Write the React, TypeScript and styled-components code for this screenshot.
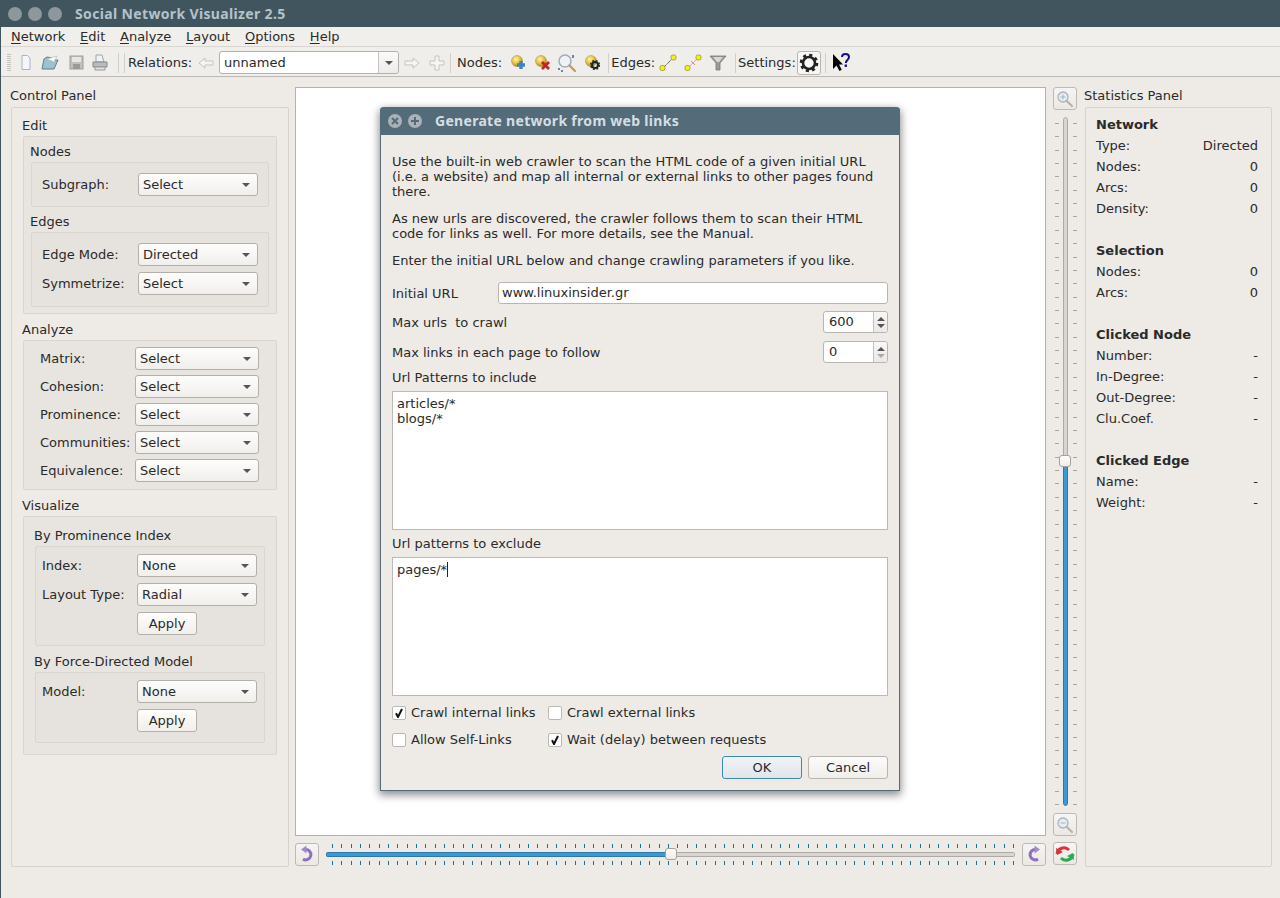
import React from 'react';
import styled, { createGlobalStyle } from 'styled-components';

const GlobalStyle = createGlobalStyle`
  * {
    margin: 0;
    padding: 0;
    box-sizing: border-box;
  }

  body {
    font-family: 'DejaVu Sans', sans-serif;
    font-size: 13px;
    color: #2a2a2a;
    background: #eeebe7;
    overflow: hidden;
  }
`;

const Root = styled.div`
  position: relative;
  width: 1280px;
  height: 898px;
  display: flex;
  flex-direction: column;
  background: #eeebe7;
  border-left: 1px solid #41555f;
  overflow: hidden;
`;

const TitleBar = styled.div`
  height: 27px;
  flex: none;
  margin-left: -1px;
  padding-left: 8px;
  display: flex;
  align-items: center;
  gap: 6px;
  background: #41555f;
`;

const WinDot = styled.span`
  width: 14px;
  height: 14px;
  border-radius: 50%;
  background: #8d979c;
`;

const WinTitle = styled.span`
  margin-left: 7px;
  padding-bottom: 1px;
  font-family: 'Noto Sans', sans-serif;
  font-weight: 700;
  font-size: 14px;
  letter-spacing: 0.35px;
  color: #b4c2cb;
`;

const MenuBar = styled.div`
  height: 20px;
  flex: none;
  padding-left: 10px;
  display: flex;
  gap: 14.75px;
  align-items: center;
  line-height: 20px;
  background: #f1efeb;
  border-bottom: 1px solid #dad7d3;
  u {
    text-underline-offset: 2px;
  }
`;

const ToolBar = styled.div`
  height: 30px;
  flex: none;
  padding-top: 2px;
  display: flex;
  align-items: center;
  background: #f0eeea;
  border-bottom: 1px solid #bdbab6;
`;

const Grip = styled.span`
  width: 4px;
  height: 18px;
  margin-left: 6px;
  background: repeating-linear-gradient(to bottom, #c6c3bf 0 1px, transparent 1px 2px);
`;

const ToolSep = styled.span<{ $left: number; $right: number }>`
  width: 1px;
  height: 20px;
  flex: none;
  background: #d2cfcb;
  margin: 0 ${(p) => p.$right}px 0 ${(p) => p.$left}px;
`;

const ToolSlot = styled.span<{ $left: number; $width?: number }>`
  flex: none;
  margin-left: ${(p) => p.$left}px;
  width: ${(p) => p.$width ?? 20}px;
  height: 20px;
  display: flex;
  align-items: center;
  justify-content: center;
`;

const ToolLabel = styled.span`
  flex: none;
`;

const RelCombo = styled.div`
  width: 180px;
  height: 23px;
  margin-left: 3px;
  flex: none;
  display: flex;
  background: #fff;
  border: 1px solid #b3b0ac;
  border-radius: 3px;
  line-height: 21px;
  padding-left: 4px;
  align-items: center;
  justify-content: space-between;
`;

const RelArrow = styled.span`
  width: 20px;
  height: 21px;
  display: flex;
  align-items: center;
  justify-content: center;
  background: linear-gradient(#fbfaf9, #eeecea);
  border-left: 1px solid #c6c3bf;
  border-radius: 0 3px 3px 0;
`;

const Caret = styled.i`
  width: 0;
  height: 0;
  border-left: 4px solid transparent;
  border-right: 4px solid transparent;
  border-top: 4px solid #555;
`;

const SettingsBtn = styled.span`
  flex: none;
  width: 24px;
  height: 24px;
  margin-left: 1px;
  border: 1px solid #b8b5b1;
  border-radius: 3px;
  background: #f8f7f5;
  display: flex;
  align-items: center;
  justify-content: center;
`;

const Main = styled.div`
  height: 790px;
  flex: none;
  padding-left: 9px;
  display: flex;
`;

const SidePanel = styled.section<{ $width: number; $left: number }>`
  width: ${(p) => p.$width}px;
  margin-left: ${(p) => p.$left}px;
  flex: none;
  display: flex;
  flex-direction: column;
`;

const PanelTitle = styled.div`
  height: 18px;
  line-height: 20px;
  margin-top: 9px;
  margin-bottom: 3px;
`;

const OuterFrame = styled.div<{ $side: number }>`
  flex: 1;
  margin-left: 1px;
  padding: 8px ${(p) => p.$side}px 0;
  border: 1px solid #d6d3cf;
  border-radius: 2px;
`;

const GroupTitle = styled.div<{ $top?: number; $outer?: boolean }>`
  height: 18px;
  line-height: 20px;
  margin-top: ${(p) => p.$top ?? 0}px;
  margin-left: ${(p) => (p.$outer ? -1 : 0)}px;
  margin-bottom: 2px;
`;

const Group = styled.div<{ $pad: string; $height: number; $gap?: number }>`
  height: ${(p) => p.$height}px;
  padding: ${(p) => p.$pad};
  display: flex;
  flex-direction: column;
  gap: ${(p) => p.$gap ?? 0}px;
  background: #e8e5e1;
  border: 1px solid #d9d6d2;
  border-radius: 2px;
`;

const SubGroup = styled(Group)`
  margin-left: 1px;
  background: #e6e3df;
`;

const FormRow = styled.div<{ $combo: number }>`
  display: grid;
  grid-template-columns: 1fr ${(p) => p.$combo}px;
  align-items: center;
  height: 23px;
`;

const Combo = styled.div`
  height: 23px;
  padding: 0 7px 0 4px;
  display: flex;
  align-items: center;
  justify-content: space-between;
  background: linear-gradient(#fdfdfc, #f1efec);
  border: 1px solid #b3b0ac;
  border-radius: 3px;
`;

const ApplyBtn = styled.div`
  grid-column: 2;
  width: 60px;
  height: 23px;
  line-height: 21px;
  text-align: center;
  background: linear-gradient(#fdfdfc, #f1efec);
  border: 1px solid #b3b0ac;
  border-radius: 3px;
`;

const StatFrame = styled(OuterFrame)`
  padding: 6px 13px 0 10px;
`;

const StatHead = styled.div<{ $first?: boolean }>`
  height: 21px;
  line-height: 21px;
  font-weight: 700;
  margin-top: ${(p) => (p.$first ? 0 : 21)}px;
`;

const StatRow = styled.div`
  height: 21px;
  line-height: 21px;
  display: flex;
  justify-content: space-between;
`;

const Center = styled.div`
  width: 782px;
  margin-left: 6px;
  margin-top: 10px;
  height: 779px;
  flex: none;
  display: grid;
  grid-template-columns: 751px 24px;
  grid-template-rows: 749px 24px;
  column-gap: 7px;
  row-gap: 6px;
`;

const Canvas = styled.div`
  background: #fff;
  border: 1px solid #b5b2ae;
`;

const VColumn = styled.div`
  display: flex;
  flex-direction: column;
  align-items: center;
  gap: 7px;
`;

const SquareBtn = styled.div`
  width: 24px;
  height: 23px;
  flex: none;
  display: flex;
  align-items: center;
  justify-content: center;
  background: linear-gradient(#f6f5f3, #ebe8e4);
  border: 1px solid #bdbab6;
  border-radius: 3px;
`;

const VSlider = styled.div`
  position: relative;
  flex: 1;
  width: 24px;
  padding: 0 0 0 2px;
  display: flex;
`;

const VTicks = styled.span`
  width: 4px;
  height: 100%;
  flex: none;
  background: repeating-linear-gradient(to bottom, transparent 0 6px, #a9a6a2 6px 7px, transparent 7px 13.35px);
`;

const VGroove = styled.div`
  width: 5px;
  margin: 0 5px 0 4px;
  flex: none;
  display: flex;
  flex-direction: column;
  border-radius: 3px;
  overflow: hidden;
`;

const VRest = styled.span`
  flex: 1;
  background: #d8d5d1;
  border: 1px solid #aeaba7;
  border-radius: 3px 3px 0 0;
`;

const VFill = styled.span`
  height: 345px;
  background: #3d98d3;
  border: 1px solid #2a78ad;
  border-radius: 0 0 3px 3px;
`;

const Handle = styled.span`
  position: absolute;
  width: 12px;
  height: 12px;
  background: linear-gradient(#fcfcfb, #efedea);
  border: 1px solid #a5a29e;
  border-radius: 3px;
`;

const VHandle = styled(Handle)`
  left: 6px;
  top: 338px;
`;

const BottomRow = styled.div`
  display: flex;
  align-items: center;
`;

const HSlider = styled.div`
  position: relative;
  flex: 1;
  height: 24px;
  margin: 0 7px;
  display: flex;
  flex-direction: column;
  justify-content: space-between;
  padding: 2px 0 1px;
`;

const HTicks = styled.span`
  height: 4px;
  margin-left: 6px;
  background: repeating-linear-gradient(to right, #1f6f95 0 1px, transparent 1px 9.33px);
`;

const HGroove = styled.div`
  height: 5px;
  display: flex;
  border-radius: 3px;
  overflow: hidden;
`;

const HFill = styled.span`
  width: 342px;
  background: #3d98d3;
  border: 1px solid #2a78ad;
`;

const HRest = styled.span`
  flex: 1;
  background: #d8d5d1;
  border: 1px solid #aeaba7;
`;

const HHandle = styled(Handle)`
  left: 339px;
  top: 6px;
`;

const Dialog = styled.div`
  position: absolute;
  left: 379px;
  top: 107px;
  width: 520px;
  height: 684px;
  display: flex;
  flex-direction: column;
  background: #eeebe7;
  border: 1px solid #546c79;
  border-top: none;
  border-radius: 4px 4px 0 0;
  box-shadow: 0 3px 9px 1px rgba(0, 0, 0, 0.45);
`;

const DialogTitle = styled.div`
  height: 28px;
  margin: 0 -1px;
  flex: none;
  padding-left: 8px;
  display: flex;
  align-items: center;
  gap: 6px;
  background: #546c79;
  border-radius: 4px 4px 0 0;
`;

const DialogCaption = styled(WinTitle)`
  margin-left: 7px;
  padding-bottom: 2px;
  letter-spacing: 0.3px;
  color: #d5dee4;
`;

const DialogBody = styled.div`
  flex: 1;
  padding: 19px 11px 0;
  display: flex;
  flex-direction: column;
`;

const Intro = styled.p`
  line-height: 15px;
  margin-bottom: 12px;
  white-space: pre-line;
`;

const UrlRow = styled.div`
  display: flex;
  align-items: center;
  justify-content: space-between;
  height: 22px;
  margin-top: 2px;
  white-space: pre;
`;

const LineInput = styled.div`
  width: 390px;
  height: 22px;
  line-height: 20px;
  padding-left: 3px;
  background: #fff;
  border: 1px solid #b9b6b2;
  border-radius: 3px;
`;

const SpinRow = styled(UrlRow)<{ $top: number }>`
  margin-top: ${(p) => p.$top}px;
`;

const Spin = styled.div`
  width: 65px;
  height: 22px;
  display: flex;
  justify-content: space-between;
  line-height: 20px;
  padding-left: 5px;
  background: #fff;
  border: 1px solid #b9b6b2;
  border-radius: 3px;
`;

const SpinButtons = styled.span`
  width: 14px;
  display: flex;
  flex-direction: column;
  align-items: center;
  justify-content: center;
  gap: 3px;
  background: linear-gradient(#f8f7f5, #ebe9e6);
  border-left: 1px solid #c6c3bf;
  border-radius: 0 3px 3px 0;
`;

const SpinUp = styled.i`
  width: 0;
  height: 0;
  border-left: 4px solid transparent;
  border-right: 4px solid transparent;
  border-bottom: 4px solid #555;
`;

const SpinDown = styled.i<{ $off?: boolean }>`
  width: 0;
  height: 0;
  border-left: 4px solid transparent;
  border-right: 4px solid transparent;
  border-top: 4px solid ${(p) => (p.$off ? '#aaa' : '#555')};
`;

const FieldLabel = styled.div<{ $top: number }>`
  height: 18px;
  line-height: 20px;
  margin-top: ${(p) => p.$top}px;
  margin-bottom: 5px;
`;

const TextBox = styled.div`
  height: 139px;
  padding: 4px;
  line-height: 15px;
  background: #fff;
  border: 1px solid #bdbab6;
  white-space: pre-line;
`;

const TextCursor = styled.span`
  display: inline-block;
  width: 1px;
  height: 15px;
  vertical-align: top;
  background: #222;
`;

const CheckGrid = styled.div`
  margin-top: 10px;
  display: grid;
  grid-template-columns: 156px 1fr;
  row-gap: 13px;
`;

const CheckItem = styled.div`
  height: 14px;
  display: flex;
  align-items: center;
  gap: 5px;
  line-height: 14px;
`;

const CheckBox = styled.span`
  width: 14px;
  height: 14px;
  flex: none;
  display: flex;
  align-items: center;
  justify-content: center;
  background: #fff;
  border: 1px solid #bdbab6;
  border-radius: 2px;
`;

const DialogButtons = styled.div`
  margin-top: 9px;
  display: flex;
  justify-content: flex-end;
  gap: 6px;
`;

const DialogBtn = styled.div<{ $primary?: boolean }>`
  width: 80px;
  height: 23px;
  line-height: 21px;
  text-align: center;
  background: ${(p) => (p.$primary ? 'linear-gradient(#f1f4f6, #dfe5e9)' : 'linear-gradient(#fbfbfa, #f0eeeb)')};
  border: 1px solid ${(p) => (p.$primary ? '#3f86b5' : '#b9b6b2')};
  border-radius: 3px;
`;

const SmallCircleBtn = styled.span`
  width: 14px;
  height: 14px;
  flex: none;
  display: flex;
  align-items: center;
  justify-content: center;
  border-radius: 50%;
  background: #a9b2b7;
`;

// toolbar drawings
const NodeBall = ({ id }: { id: string }) => (
  <>
    <defs>
      <radialGradient id={id} cx="0.4" cy="0.35" r="0.7">
        <stop offset="0" stopColor="#fdf6b0" />
        <stop offset="0.6" stopColor="#e3b92e" />
        <stop offset="1" stopColor="#8f7a2a" />
      </radialGradient>
    </defs>
    <circle cx="7" cy="7" r="5.5" fill={`url(#${id})`} stroke="#a59a66" strokeWidth="0.6" />
  </>
);

const Arrow = ({ flip }: { flip?: boolean }) => (
  <svg width="16" height="12" viewBox="0 0 16 12">
    <path
      d={flip ? 'M15 6 9 1v3H1v4h8v3z' : 'M1 6l6-5v3h8v4H7v3z'}
      fill="#f6f5f3"
      stroke="#c5c3bf"
    />
  </svg>
);

const EdgeIcon = ({ broken }: { broken?: boolean }) => (
  <svg width="18" height="18" viewBox="0 0 18 18">
    <path d="M4 14 14 4" stroke={broken ? '#d98a8a' : '#666'} strokeWidth="1" strokeDasharray={broken ? '2 1' : '5 1'} />
    {broken && <path d="M7 7l4 4" stroke="#e08080" strokeWidth="1" />}
    <rect x="1" y="11.5" width="5" height="5" rx="1.8" fill="#f4f01a" stroke="#8b8a20" strokeWidth="0.7" />
    <rect x="12" y="1" width="5" height="5" rx="1.8" fill="#f4f01a" stroke="#8b8a20" strokeWidth="0.7" />
  </svg>
);

const Magnifier = ({ sign }: { sign: 'plus' | 'minus' }) => (
  <svg width="18" height="18" viewBox="0 0 18 18">
    <circle cx="7" cy="7" r="5" fill="#e6ecf1" stroke="#aab4bb" strokeWidth="1.3" />
    <path d="M10.8 11 16 16" stroke="#b4b0aa" strokeWidth="2" strokeLinecap="round" />
    <path d={sign === 'plus' ? 'M4.5 7h5M7 4.5v5' : 'M4.5 7h5'} stroke="#9fb3cc" strokeWidth="1" />
  </svg>
);

const RotateIcon = ({ flip }: { flip?: boolean }) => (
  <svg width="16" height="18" viewBox="0 0 16 18" style={flip ? { transform: 'scaleX(-1)' } : undefined}>
    <path d="M6 4.5a5.2 5.2 0 1 1-2 9.6" fill="none" stroke="#8a72be" strokeWidth="3" />
    <path d="M7.5 0.5 2 4.5l5.5 4z" fill="#a08bd0" />
  </svg>
);

const Gear = () => (
  <svg width="20" height="20" viewBox="0 0 20 20">
    <circle cx="10" cy="10" r="6" fill="none" stroke="#222" strokeWidth="2.6" />
    <circle cx="10" cy="10" r="8" fill="none" stroke="#222" strokeWidth="2.6" strokeDasharray="3.1 3.18" />
  </svg>
);

const CheckMark = () => (
  <svg width="10" height="10" viewBox="0 0 10 10">
    <path d="M2 5.2 4 9l4-8" fill="none" stroke="#111" strokeWidth="2" />
  </svg>
);

const SmallCross = ({ plus }: { plus?: boolean }) => (
  <svg width="8" height="8" viewBox="0 0 8 8">
    <path d={plus ? 'M4 0v8M0 4h8' : 'M1 1l6 6M7 1 1 7'} stroke="#546c79" strokeWidth="2" />
  </svg>
);

const comboRow = (label: string, value: string, width: number) => (
  <FormRow $combo={width} key={label}>
    <span>{label}</span>
    <Combo>
      {value}
      <Caret />
    </Combo>
  </FormRow>
);

const stats = [
  { head: 'Network', rows: [['Type:', 'Directed'], ['Nodes:', '0'], ['Arcs:', '0'], ['Density:', '0']] },
  { head: 'Selection', rows: [['Nodes:', '0'], ['Arcs:', '0']] },
  { head: 'Clicked Node', rows: [['Number:', '-'], ['In-Degree:', '-'], ['Out-Degree:', '-'], ['Clu.Coef.', '-']] },
  { head: 'Clicked Edge', rows: [['Name:', '-'], ['Weight:', '-']] },
];

const App: React.FC = () => {
  return (
    <Root>
      <GlobalStyle />
      <TitleBar>
        <WinDot />
        <WinDot />
        <WinDot />
        <WinTitle>Social Network Visualizer 2.5</WinTitle>
      </TitleBar>

      <MenuBar>
        <span><u>N</u>etwork</span>
        <span><u>E</u>dit</span>
        <span><u>A</u>nalyze</span>
        <span><u>L</u>ayout</span>
        <span><u>O</u>ptions</span>
        <span><u>H</u>elp</span>
      </MenuBar>

      <ToolBar>
        <Grip />
        <ToolSlot $left={5}>
          <svg width="10" height="15" viewBox="0 0 10 15">
            <path d="M1 .5h5.5L9 3v11.5H1z" fill="#f4f6fb" stroke="#aab2c4" />
          </svg>
        </ToolSlot>
        <ToolSlot $left={4}>
          <svg width="18" height="16" viewBox="0 0 18 16">
            <path d="M1 14 3 4l3-2 5 1-1 2h7l-4 9z" fill="#9fc0cf" stroke="#5f7f8f" />
            <path d="M6 4 16 1l-3 6z" fill="#fff" stroke="#a9b4b8" strokeWidth="0.6" />
          </svg>
        </ToolSlot>
        <ToolSlot $left={6}>
          <svg width="15" height="15" viewBox="0 0 15 15">
            <rect x="1" y="1" width="13" height="13" fill="#c2c0bd" stroke="#a09e9b" />
            <rect x="3" y="2" width="9" height="5" fill="#e8e6e3" />
            <rect x="4" y="9" width="7" height="5" fill="#9c9a97" />
          </svg>
        </ToolSlot>
        <ToolSlot $left={4}>
          <svg width="16" height="17" viewBox="0 0 16 17">
            <path d="M4 1h6l2 7H4z" fill="#eef2f6" stroke="#9aa5ae" />
            <path d="M1 8h14v5H1z" fill="#b9bcbd" stroke="#888" />
            <path d="M3 13h10v3H3z" fill="#dfe1e2" stroke="#999" />
          </svg>
        </ToolSlot>
        <ToolSep $left={8} $right={5} />
        <ToolSep $left={0} $right={3} />
        <ToolLabel>Relations:</ToolLabel>
        <ToolSlot $left={4}><Arrow /></ToolSlot>
        <RelCombo>
          unnamed
          <RelArrow><Caret /></RelArrow>
        </RelCombo>
        <ToolSlot $left={3}><Arrow flip /></ToolSlot>
        <ToolSlot $left={5}>
          <svg width="16" height="16" viewBox="0 0 16 16">
            <path d="M6 1h4v5h5v4h-5v5H6v-5H1V6h5z" fill="#f6f5f3" stroke="#c5c3bf" />
          </svg>
        </ToolSlot>
        <ToolSep $left={3} $right={6} />
        <ToolLabel>Nodes:</ToolLabel>
        <ToolSlot $left={7}>
          <svg width="18" height="18" viewBox="0 0 18 18">
            <NodeBall id="nodeAdd" />
            <path d="M11 7v8M7 11h8" stroke="#3f86c0" strokeWidth="3.4" />
          </svg>
        </ToolSlot>
        <ToolSlot $left={4}>
          <svg width="18" height="18" viewBox="0 0 18 18">
            <NodeBall id="nodeDel" />
            <path d="M8 8l7 7M15 8l-7 7" stroke="#c8202a" strokeWidth="2.8" />
          </svg>
        </ToolSlot>
        <ToolSlot $left={4}>
          <svg width="20" height="20" viewBox="0 0 20 20">
            <circle cx="8" cy="8" r="6" fill="#eef3f7" stroke="#a4adb4" strokeWidth="1.5" />
            <path d="M12.5 12.5 18 18" stroke="#c89a5a" strokeWidth="2.4" strokeLinecap="round" />
            <path d="M16 2v3M1 16h2M4 18h2" stroke="#3d5fa8" strokeWidth="1.5" />
          </svg>
        </ToolSlot>
        <ToolSlot $left={6}>
          <svg width="18" height="18" viewBox="0 0 18 18">
            <NodeBall id="nodeCfg" />
            <circle cx="11" cy="11" r="3" fill="none" stroke="#222" strokeWidth="2" />
            <circle cx="11" cy="11" r="4.4" fill="none" stroke="#222" strokeWidth="1.4" strokeDasharray="1.8 1.7" />
          </svg>
        </ToolSlot>
        <ToolSep $left={5} $right={2} />
        <ToolLabel>Edges:</ToolLabel>
        <ToolSlot $left={3}><EdgeIcon /></ToolSlot>
        <ToolSlot $left={5}><EdgeIcon broken /></ToolSlot>
        <ToolSlot $left={5}>
          <svg width="18" height="18" viewBox="0 0 18 18">
            <path d="M1 2h16l-6 7v7H7V9z" fill="#9b9a96" stroke="#777" strokeWidth="0.8" />
            <path d="M4 3h10l-4 5H8z" fill="#d9d8d5" />
          </svg>
        </ToolSlot>
        <ToolSep $left={7} $right={2} />
        <ToolLabel>Settings:</ToolLabel>
        <SettingsBtn><Gear /></SettingsBtn>
        <ToolSep $left={4} $right={0} />
        <ToolSlot $left={4} $width={22}>
          <svg width="20" height="20" viewBox="0 0 20 20">
            <path d="M2 1v15l3.5-3.5L8.5 18l2.2-1.2-2.6-5.2H12z" fill="#000" />
            <path d="M11 4c0-4 7-4 7 0 0 3-3.2 2.8-3.2 6" fill="none" stroke="#10108a" strokeWidth="2" />
            <rect x="13.6" y="11.5" width="2.4" height="2.4" fill="#10108a" />
          </svg>
        </ToolSlot>
      </ToolBar>

      <Main>
        <SidePanel $width={279} $left={0}>
          <PanelTitle>Control Panel</PanelTitle>
          <OuterFrame $side={11}>
            <GroupTitle $outer>Edit</GroupTitle>
            <Group $height={178} $pad="5px 7px 0 6px">
              <GroupTitle>Nodes</GroupTitle>
              <SubGroup $height={45} $pad="10px 10px 0 10px">
                {comboRow('Subgraph:', 'Select', 120)}
              </SubGroup>
              <GroupTitle $top={5}>Edges</GroupTitle>
              <SubGroup $height={75} $pad="10px 10px 0 10px" $gap={6}>
                {comboRow('Edge Mode:', 'Directed', 120)}
                {comboRow('Symmetrize:', 'Select', 120)}
              </SubGroup>
            </Group>

            <GroupTitle $top={6} $outer>Analyze</GroupTitle>
            <Group $height={150} $pad="6px 17px 0 16px" $gap={5}>
              {comboRow('Matrix:', 'Select', 124)}
              {comboRow('Cohesion:', 'Select', 124)}
              {comboRow('Prominence:', 'Select', 124)}
              {comboRow('Communities:', 'Select', 124)}
              {comboRow('Equivalence:', 'Select', 124)}
            </Group>

            <GroupTitle $top={6} $outer>Visualize</GroupTitle>
            <Group $height={239} $pad="9px 11px 0 10px">
              <GroupTitle>By Prominence Index</GroupTitle>
              <SubGroup $height={100} $pad="7px 7px 0 6px" $gap={6}>
                {comboRow('Index:', 'None', 120)}
                {comboRow('Layout Type:', 'Radial', 120)}
                <FormRow $combo={120}><ApplyBtn>Apply</ApplyBtn></FormRow>
              </SubGroup>
              <GroupTitle $top={6}>By Force-Directed Model</GroupTitle>
              <SubGroup $height={71} $pad="7px 7px 0 6px" $gap={6}>
                {comboRow('Model:', 'None', 120)}
                <FormRow $combo={120}><ApplyBtn>Apply</ApplyBtn></FormRow>
              </SubGroup>
            </Group>
          </OuterFrame>
        </SidePanel>

        <Center>
          <Canvas />
          <VColumn>
            <SquareBtn><Magnifier sign="plus" /></SquareBtn>
            <VSlider>
              <VTicks />
              <VGroove>
                <VRest />
                <VFill />
              </VGroove>
              <VTicks />
              <VHandle />
            </VSlider>
            <SquareBtn><Magnifier sign="minus" /></SquareBtn>
          </VColumn>
          <BottomRow>
            <SquareBtn><RotateIcon /></SquareBtn>
            <HSlider>
              <HTicks />
              <HGroove>
                <HFill />
                <HRest />
              </HGroove>
              <HTicks />
              <HHandle />
            </HSlider>
            <SquareBtn><RotateIcon flip /></SquareBtn>
          </BottomRow>
          <SquareBtn>
            <svg width="20" height="18" viewBox="0 0 20 18">
              <path d="M2 9a7 7 0 0 1 12-4" fill="none" stroke="#d8353a" strokeWidth="3" />
              <path d="M1 3l1 7 6-3z" fill="#d8353a" />
              <path d="M18 9a7 7 0 0 1-12 4" fill="none" stroke="#2fa84f" strokeWidth="3" />
              <path d="M19 15l-1-7-6 3z" fill="#2fa84f" />
            </svg>
          </SquareBtn>
        </Center>

        <SidePanel $width={188} $left={7}>
          <PanelTitle>Statistics Panel</PanelTitle>
          <StatFrame $side={0}>
            {stats.map((s, i) => (
              <div key={s.head}>
                <StatHead $first={i === 0}>{s.head}</StatHead>
                {s.rows.map(([k, v]) => (
                  <StatRow key={k}>
                    <span>{k}</span>
                    <span>{v}</span>
                  </StatRow>
                ))}
              </div>
            ))}
          </StatFrame>
        </SidePanel>
      </Main>

      <Dialog>
        <DialogTitle>
          <SmallCircleBtn><SmallCross /></SmallCircleBtn>
          <SmallCircleBtn><SmallCross plus /></SmallCircleBtn>
          <DialogCaption>Generate network from web links</DialogCaption>
        </DialogTitle>
        <DialogBody>
          <Intro>{'Use the built-in web crawler to scan the HTML code of a given initial URL\n(i.e. a website) and map all internal or external links to other pages found\nthere.'}</Intro>
          <Intro>{'As new urls are discovered, the crawler follows them to scan their HTML\ncode for links as well. For more details, see the Manual.'}</Intro>
          <Intro>Enter the initial URL below and change crawling parameters if you like.</Intro>
          <UrlRow>
            <span>Initial URL</span>
            <LineInput>www.linuxinsider.gr</LineInput>
          </UrlRow>
          <SpinRow $top={7}>
            <span>Max urls  to crawl</span>
            <Spin>
              600
              <SpinButtons><SpinUp /><SpinDown /></SpinButtons>
            </Spin>
          </SpinRow>
          <SpinRow $top={8}>
            <span>Max links in each page to follow</span>
            <Spin>
              0
              <SpinButtons><SpinUp /><SpinDown $off /></SpinButtons>
            </Spin>
          </SpinRow>
          <FieldLabel $top={5}>Url Patterns to include</FieldLabel>
          <TextBox>{'articles/*\nblogs/*'}</TextBox>
          <FieldLabel $top={4}>Url patterns to exclude</FieldLabel>
          <TextBox>pages/*<TextCursor /></TextBox>
          <CheckGrid>
            <CheckItem><CheckBox><CheckMark /></CheckBox>Crawl internal links</CheckItem>
            <CheckItem><CheckBox />Crawl external links</CheckItem>
            <CheckItem><CheckBox />Allow Self-Links</CheckItem>
            <CheckItem><CheckBox><CheckMark /></CheckBox>Wait (delay) between requests</CheckItem>
          </CheckGrid>
          <DialogButtons>
            <DialogBtn $primary>OK</DialogBtn>
            <DialogBtn>Cancel</DialogBtn>
          </DialogButtons>
        </DialogBody>
      </Dialog>
    </Root>
  );
};

export default App;
